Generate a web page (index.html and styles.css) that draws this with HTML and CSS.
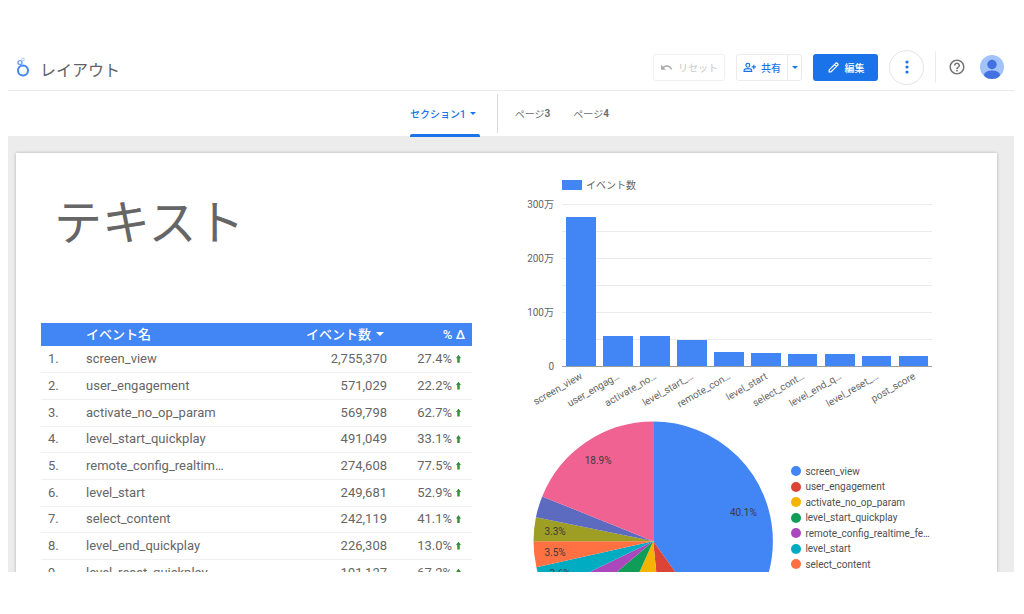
FILE: index.html
```
<!DOCTYPE html>
<html lang="ja">
<head>
<meta charset="utf-8">
<meta name="viewport" content="width=device-width, initial-scale=1">
<title>レイアウト</title>
<link rel="stylesheet" href="styles.css">
</head>
<body>
<div class="app">
  <header class="topbar">
    <svg class="logo" viewBox="0 0 14 20" aria-hidden="true">
      <circle cx="7" cy="13.6" r="5" fill="none" stroke="#4285f4" stroke-width="2"/>
      <circle cx="4" cy="5.6" r="2" fill="none" stroke="#6ba0f8" stroke-width="1.4"/>
      <circle cx="7" cy="2.4" r="1.3" fill="none" stroke="#bdd4fb" stroke-width="1.2"/>
    </svg>
    <h1 class="doc-title">レイアウト</h1>
    <div class="actions">
      <button class="btn reset" type="button" disabled>
        <svg class="icon" viewBox="0 0 24 24" aria-hidden="true"><path d="M12.5 8c-2.650 0-5.050.99-6.900 2.600L2 7v9h9l-3.620-3.620c1.390-1.160 3.160-1.880 5.120-1.880 3.540 0 6.550 2.310 7.600 5.500l2.370-.780C21.080 11.030 17.150 8 12.500 8z"/></svg>
        リセット
      </button>
      <div class="split">
        <button class="btn share" type="button">
          <svg class="icon outline" viewBox="0 0 24 24" aria-hidden="true"><circle cx="9" cy="8" r="3.500"/><path d="M2 19v-1.500c0-2.300 4-3.500 7-3.500s7 1.200 7 3.500V19zM20 7v8M16 11h8"/></svg>
          共有
        </button>
        <button class="btn share-more" type="button" aria-label="共有オプション"><svg class="caret" viewBox="0 0 6 3" aria-hidden="true"><path d="M0 0h6L3 3z"/></svg></button>
      </div>
      <button class="btn edit" type="button">
        <svg class="icon outline" viewBox="0 0 24 24" aria-hidden="true"><path d="M4 20v-3.500L16.800 3.700a1 1 0 0 1 1.400 0l2.100 2.100a1 1 0 0 1 0 1.400L7.500 20zM14 6.500l3.500 3.500"/></svg>
        編集
      </button>
      <button class="more" type="button" aria-label="その他">
        <svg viewBox="0 0 4 14" aria-hidden="true"><circle cx="2" cy="2" r="1.600"/><circle cx="2" cy="7" r="1.600"/><circle cx="2" cy="12" r="1.600"/></svg>
      </button>
      <span class="rule"></span>
      <button class="help" type="button" aria-label="ヘルプ">
        <svg viewBox="0 0 24 24" aria-hidden="true"><path d="M11 18h2v-2h-2v2zm1-16C6.480 2 2 6.480 2 12s4.480 10 10 10 10-4.480 10-10S17.520 2 12 2zm0 18c-4.410 0-8-3.590-8-8s3.590-8 8-8 8 3.590 8 8-3.590 8-8 8zm0-14c-2.210 0-4 1.790-4 4h2c0-1.100.9-2 2-2s2 .9 2 2c0 2-3 1.750-3 5h2c0-2.250 3-2.500 3-5 0-2.210-1.790-4-4-4z"/></svg>
      </button>
      <button class="avatar" type="button" aria-label="アカウント">
        <svg viewBox="0 0 24 24" aria-hidden="true"><defs><clipPath id="face"><circle cx="12" cy="12" r="12"/></clipPath></defs><g clip-path="url(#face)"><path fill="#a1c2fa" d="M0 0h24v24H0z"/><circle cx="12" cy="9.500" r="4.700" fill="#4272df"/><ellipse cx="12" cy="20" rx="8" ry="4.600" fill="#4272df"/></g></svg>
      </button>
    </div>
  </header>

  <nav class="tabs" aria-label="ページ">
    <a class="tab current" href="#section1" aria-current="page">セクション1<svg class="caret" viewBox="0 0 6 3" aria-hidden="true"><path d="M0 0h6L3 3z"/></svg></a>
    <span class="tab-rule"></span>
    <a class="tab" href="#page3">ページ<b>3</b></a>
    <a class="tab" href="#page4">ページ<b>4</b></a>
  </nav>

  <main class="canvas">
    <div class="sheet">
      <section class="left">
        <h2 class="heading">テキスト</h2>
        <table class="events">
          <thead>
            <tr><th class="idx"></th><th class="name">イベント名</th><th class="count">イベント数<svg class="sort" viewBox="0 0 8 4" aria-hidden="true"><path d="M0 0h8L4 4z"/></svg></th><th class="delta">% Δ</th></tr>
          </thead>
          <tbody>
            <tr><td class="idx">1.</td><td class="name">screen_view</td><td class="count">2,755,370</td><td class="delta up">27.4%</td></tr>
            <tr><td class="idx">2.</td><td class="name">user_engagement</td><td class="count">571,029</td><td class="delta up">22.2%</td></tr>
            <tr><td class="idx">3.</td><td class="name">activate_no_op_param</td><td class="count">569,798</td><td class="delta up">62.7%</td></tr>
            <tr><td class="idx">4.</td><td class="name">level_start_quickplay</td><td class="count">491,049</td><td class="delta up">33.1%</td></tr>
            <tr><td class="idx">5.</td><td class="name">remote_config_realtim…</td><td class="count">274,608</td><td class="delta up">77.5%</td></tr>
            <tr><td class="idx">6.</td><td class="name">level_start</td><td class="count">249,681</td><td class="delta up">52.9%</td></tr>
            <tr><td class="idx">7.</td><td class="name">select_content</td><td class="count">242,119</td><td class="delta up">41.1%</td></tr>
            <tr><td class="idx">8.</td><td class="name">level_end_quickplay</td><td class="count">226,308</td><td class="delta up">13.0%</td></tr>
            <tr><td class="idx">9.</td><td class="name">level_reset_quickplay</td><td class="count">191,127</td><td class="delta up">67.2%</td></tr>
          </tbody>
        </table>
      </section>

      <section class="right">
        <svg class="bars" viewBox="0 0 420 245" role="img" aria-label="イベント数">
          <rect class="bar" x="42" y="10" width="20" height="10"/>
          <text x="66" y="19">イベント数</text>
          <path class="grid" d="M42 34h370M42 61h370M42 88h370M42 115h370M42 142h370M42 169h370"/>
          <g class="ticks">
            <text x="34" y="38">300万</text>
            <text x="34" y="92">200万</text>
            <text x="34" y="146">100万</text>
            <text x="34" y="200">0</text>
          </g>
          <g class="bar">
            <rect x="46" y="47" width="30" height="149"/>
            <rect x="83" y="166" width="30" height="30"/>
            <rect x="120" y="166" width="30" height="30"/>
            <rect x="157" y="170" width="30" height="26"/>
            <rect x="194" y="182" width="30" height="14"/>
            <rect x="231" y="183" width="30" height="13"/>
            <rect x="268" y="184" width="29" height="12"/>
            <rect x="305" y="184" width="30" height="12"/>
            <rect x="342" y="186" width="29" height="10"/>
            <rect x="379" y="186" width="29" height="10"/>
          </g>
          <path class="axis" d="M42 196h370"/>
          <g class="labels">
            <text transform="translate(63 208) rotate(-30)">screen_view</text>
            <text transform="translate(100 208) rotate(-30)">user_engag…</text>
            <text transform="translate(137 208) rotate(-30)">activate_no…</text>
            <text transform="translate(174 208) rotate(-30)">level_start_…</text>
            <text transform="translate(211 208) rotate(-30)">remote_con…</text>
            <text transform="translate(248 208) rotate(-30)">level_start</text>
            <text transform="translate(285 208) rotate(-30)">select_cont…</text>
            <text transform="translate(322 208) rotate(-30)">level_end_q…</text>
            <text transform="translate(359 208) rotate(-30)">level_reset_…</text>
            <text transform="translate(396 208) rotate(-30)">post_score</text>
          </g>
        </svg>

        <div class="pie-row">
          <svg class="pie" viewBox="0 0 260 260" role="img" aria-label="イベント数の割合">
            <g class="slices" transform="rotate(-90 133 126)">
              <circle stroke="#4285f4" pathLength="100" cx="133" cy="126" r="60" stroke-dasharray="40.1 100"/>
              <circle stroke="#db4437" pathLength="100" cx="133" cy="126" r="60" stroke-dasharray="8.3 100" stroke-dashoffset="-40.1"/>
              <circle stroke="#f4b400" pathLength="100" cx="133" cy="126" r="60" stroke-dasharray="8.3 100" stroke-dashoffset="-48.4"/>
              <circle stroke="#0f9d58" pathLength="100" cx="133" cy="126" r="60" stroke-dasharray="7.1 100" stroke-dashoffset="-56.7"/>
              <circle stroke="#ab47bc" pathLength="100" cx="133" cy="126" r="60" stroke-dasharray="4 100" stroke-dashoffset="-63.8"/>
              <circle stroke="#00acc1" pathLength="100" cx="133" cy="126" r="60" stroke-dasharray="3.7 100" stroke-dashoffset="-67.8"/>
              <circle stroke="#ff7043" pathLength="100" cx="133" cy="126" r="60" stroke-dasharray="3.5 100" stroke-dashoffset="-71.5"/>
              <circle stroke="#9e9d24" pathLength="100" cx="133" cy="126" r="60" stroke-dasharray="3.2 100" stroke-dashoffset="-75"/>
              <circle stroke="#5c6bc0" pathLength="100" cx="133" cy="126" r="60" stroke-dasharray="2.9 100" stroke-dashoffset="-78.2"/>
              <circle stroke="#f06292" pathLength="100" cx="133" cy="126" r="60" stroke-dasharray="18.9 100" stroke-dashoffset="-81.1"/>
            </g>
            <g class="shares">
              <text x="223" y="101">40.1%</text>
              <text x="78" y="49">18.9%</text>
              <text x="35" y="120">3.3%</text>
              <text x="35" y="141">3.5%</text>
              <text x="40" y="162">3.6%</text>
            </g>
          </svg>
          <ul class="legend">
            <li class="c1">screen_view</li>
            <li class="c2">user_engagement</li>
            <li class="c3">activate_no_op_param</li>
            <li class="c4">level_start_quickplay</li>
            <li class="c5">remote_config_realtime_fe…</li>
            <li class="c6">level_start</li>
            <li class="c7">select_content</li>
          </ul>
        </div>
      </section>
    </div>
  </main>
</div>
</body>
</html>
```
FILE: styles.css
```
* { box-sizing: border-box; }

body {
  margin: 0;
  height: 100vh;
  padding: 44px 10px 42px 8px;
  background: #fff;
  color: #666;
  font-family: Roboto, "Noto Sans CJK JP", sans-serif;
  font-size: 10px;
}

h1, h2, ul { margin: 0; padding: 0; font-weight: 400; }
button { margin: 0; padding: 0; border: 0; background: none; font: inherit; color: inherit; }
svg { display: block; flex: none; fill: currentColor; }

.app { height: 100%; display: flex; flex-direction: column; overflow: hidden; }

/* Top bar */
.topbar {
  flex: none;
  height: 47px;
  display: flex;
  align-items: center;
  padding: 0 10px 0 8px;
  border-bottom: 1px solid #ebebeb;
}
.logo { width: 14px; height: 20px; }
.doc-title { margin-left: 10px; padding-top: 8px; font-size: 16px; line-height: 24px; color: #5f6368; }
.actions { margin-left: auto; display: flex; align-items: center; gap: 11px; }
.btn {
  height: 27px;
  display: flex;
  align-items: center;
  justify-content: center;
  gap: 5px;
  white-space: nowrap;
  font-weight: 500;
}
.icon { width: 13px; height: 13px; }
.outline { fill: none; stroke: currentColor; stroke-width: 2.2; }
.caret { width: 6px; height: 3px; }
.reset { width: 72px; border: 1px solid #f0f0f0; border-radius: 3px; color: #c8c8c8; font-weight: 400; }
.reset .icon { color: #aaa; }
.split { display: flex; border: 1px solid #ebebeb; border-radius: 3px; color: #1a73e8; }
.split .btn { height: 25px; }
.share { width: 50px; }
.share-more { width: 14px; border-left: 1px solid #ebebeb; }
.edit { width: 65px; border-radius: 3px; background: #1a73e8; color: #fff; }
.more {
  width: 35px;
  height: 35px;
  display: flex;
  align-items: center;
  justify-content: center;
  border: 1px solid #e4e4e4;
  border-radius: 50%;
  color: #1a73e8;
}
.more svg { width: 4px; height: 14px; }
.rule { width: 1px; height: 32px; background: #ebebeb; }
.help { margin-left: 1px; color: #757575; }
.help svg { width: 18px; height: 18px; }
.avatar { margin-left: 3px; }
.avatar svg { width: 24px; height: 24px; }

/* Page tabs */
.tabs { flex: none; height: 45px; display: flex; justify-content: center; align-items: center; padding-right: 3px; }
.tab {
  position: relative;
  height: 45px;
  display: flex;
  align-items: center;
  color: #6b6f73;
  text-decoration: none;
}
.tab b { font-weight: 700; }
.tab + .tab { margin-left: 23px; }
.current { padding-right: 4px; gap: 4px; color: #1a73e8; font-weight: 500; }
.current::after {
  content: "";
  position: absolute;
  left: 0;
  right: 0;
  bottom: -1px;
  height: 3px;
  border-radius: 2px 2px 0 0;
  background: #1a73e8;
}
.tab-rule { width: 1px; height: 39px; margin: 0 17px; background: #dadada; }

/* Report sheet */
.canvas { flex: 1; min-height: 0; padding: 17px 17px 0 8px; background: #ececec; overflow: hidden; }
.sheet {
  display: grid;
  grid-template-columns: 431fr 420fr;
  gap: 48px;
  padding: 0 57px 0 25px;
  background: #fff;
  box-shadow: 0 0 3px rgba(0, 0, 0, 0.25);
}
.left { padding-top: 39px; }
.heading { padding-left: 13px; margin-bottom: 67px; font-size: 48px; line-height: 64px; }

.events { width: 100%; border-collapse: collapse; table-layout: fixed; font-size: 13px; }
.events tr { height: 27px; }
.events tbody tr:nth-child(3n + 1) { height: 26px; }
.events thead tr { height: 23px; background: #4285f4; color: #fff; }
.events th { padding: 0; font-weight: 500; line-height: 16px; }
.events td { padding: 0; line-height: 16px; border-bottom: 1px solid #f0f0f0; }
.events .idx { width: 45px; padding-left: 7px; text-align: left; }
.events .name { text-align: left; }
.events .count { width: 120px; text-align: right; }
.events .delta { width: 85px; padding-right: 7px; text-align: right; }
.events .up { padding-right: 11px; }
.events th.count { padding-right: 3px; }
.sort { display: inline-block; width: 8px; height: 4px; margin-left: 5px; vertical-align: 3px; }
.up::after {
  content: "";
  display: inline-block;
  width: 5px;
  height: 8px;
  margin-left: 4px;
  background: #388e3c;
  clip-path: polygon(50% 0, 100% 45%, 75% 45%, 75% 100%, 25% 100%, 25% 45%, 0 45%);
}

/* Charts */
.right { padding-top: 17px; }
.right text { fill: #666; font-size: 10px; }
.bars { width: 100%; height: auto; }
.bar { fill: #4285f4; }
.grid { stroke: #ebebeb; shape-rendering: crispEdges; }
.axis { stroke: #9e9e9e; stroke-width: 1; shape-rendering: crispEdges; }
.ticks, .labels { text-anchor: end; }
.pie-row { display: flex; }
.pie { width: 62%; height: auto; }
.slices { fill: none; stroke-width: 119; }
.right .shares text { fill: #3c3c3c; text-anchor: middle; }
.legend { padding: 48px 0 0 11px; list-style: none; color: #505050; }
.legend li { height: 16px; display: flex; align-items: center; gap: 4px; white-space: nowrap; }
.legend li:nth-child(even) { height: 15px; }
.legend li::before { content: ""; width: 10px; height: 10px; border-radius: 50%; background: currentColor; }
.c1::before { color: #4285f4; }
.c2::before { color: #db4437; }
.c3::before { color: #f4b400; }
.c4::before { color: #0f9d58; }
.c5::before { color: #ab47bc; }
.c6::before { color: #00acc1; }
.c7::before { color: #ff7043; }
```
